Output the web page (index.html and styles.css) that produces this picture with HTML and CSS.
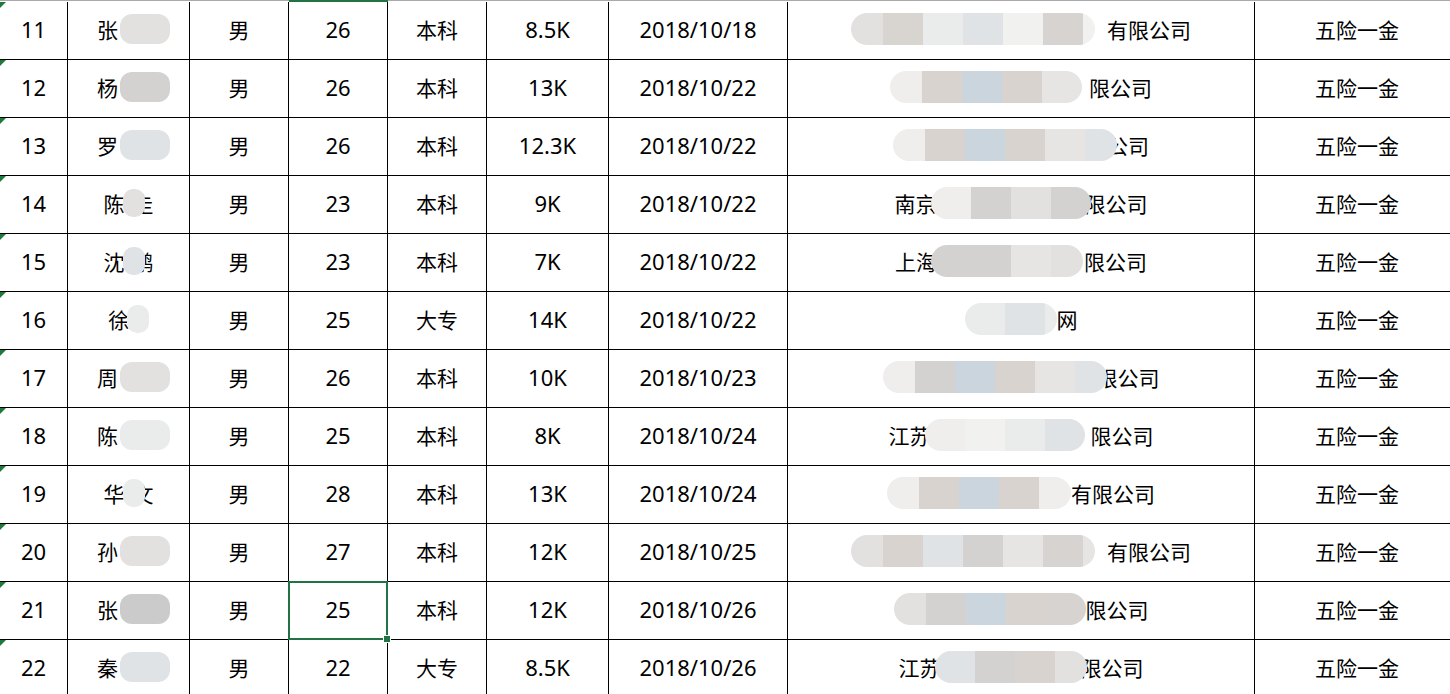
FILE: index.html
```html
<!DOCTYPE html>
<html lang="zh">
<head>
<meta charset="utf-8">
<title>Sheet</title>
<link rel="stylesheet" href="styles.css">
</head>
<body>
<div class="sheet">
  <div class="topline">
    <span></span><span></span><span></span><span class="sel"></span><span></span><span></span><span></span><span></span><span></span>
  </div>

  <div class="row">
    <div class="cell num idx">11</div>
    <div class="cell"><span class="t">张</span><span class="mz nm"><i class="b g1"></i></span></div>
    <div class="cell">男</div><div class="cell num">26</div><div class="cell">本科</div><div class="cell num">8.5K</div><div class="cell num">2018/10/18</div>
    <div class="cell co"><span class="mz"><i class="b g1 s"></i><i class="b g2"></i><i class="b g3"></i><i class="b g4"></i><i class="b g5"></i><i class="b g6"></i><i class="b g5 q"></i></span><span class="t gap">有限公司</span></div>
    <div class="cell">五险一金</div>
  </div>

  <div class="row">
    <div class="cell num idx">12</div>
    <div class="cell"><span class="t">杨</span><span class="mz nm"><i class="b g7"></i></span></div>
    <div class="cell">男</div><div class="cell num">26</div><div class="cell">本科</div><div class="cell num">13K</div><div class="cell num">2018/10/22</div>
    <div class="cell co"><span class="mz"><i class="b g8 s"></i><i class="b pk"></i><i class="b bl"></i><i class="b pk"></i><i class="b g9"></i></span><span class="t gap-s">限公司</span></div>
    <div class="cell">五险一金</div>
  </div>

  <div class="row">
    <div class="cell num idx">13</div>
    <div class="cell"><span class="t">罗</span><span class="mz nm"><i class="b g4"></i></span></div>
    <div class="cell">男</div><div class="cell num">26</div><div class="cell">本科</div><div class="cell num">12.3K</div><div class="cell num">2018/10/22</div>
    <div class="cell co"><span class="mz"><i class="b g8 s"></i><i class="b pk"></i><i class="b bl"></i><i class="b pk"></i><i class="b g9"></i><i class="b g4 s"></i></span><span class="t over">公司</span></div>
    <div class="cell">五险一金</div>
  </div>

  <div class="row">
    <div class="cell num idx">14</div>
    <div class="cell"><span class="t">陈</span><span class="mz dot"><i class="b g1 h"></i></span><span class="t">圭</span></div>
    <div class="cell">男</div><div class="cell num">23</div><div class="cell">本科</div><div class="cell num">9K</div><div class="cell num">2018/10/22</div>
    <div class="cell co"><span class="t">南京</span><span class="mz over"><i class="b g8"></i><i class="b g7"></i><i class="b g1"></i><i class="b g7"></i></span><span class="t">限公司</span></div>
    <div class="cell">五险一金</div>
  </div>

  <div class="row">
    <div class="cell num idx">15</div>
    <div class="cell"><span class="t">沈</span><span class="mz dot"><i class="b g4 h"></i></span><span class="t">鹏</span></div>
    <div class="cell">男</div><div class="cell num">23</div><div class="cell">本科</div><div class="cell num">7K</div><div class="cell num">2018/10/22</div>
    <div class="cell co"><span class="t">上海</span><span class="mz over"><i class="b g7"></i><i class="b g7"></i><i class="b g9"></i><i class="b g1 s"></i></span><span class="t gap-s">限公司</span></div>
    <div class="cell">五险一金</div>
  </div>

  <div class="row">
    <div class="cell num idx">16</div>
    <div class="cell"><span class="t">徐</span><span class="mz dot"><i class="b g3 h"></i></span><span class="t">=</span></div>
    <div class="cell">男</div><div class="cell num">25</div><div class="cell">大专</div><div class="cell num">14K</div><div class="cell num">2018/10/22</div>
    <div class="cell co"><span class="mz"><i class="b g3"></i><i class="b g4"></i><i class="b g3 q"></i></span><span class="t">网</span></div>
    <div class="cell">五险一金</div>
  </div>

  <div class="row">
    <div class="cell num idx">17</div>
    <div class="cell"><span class="t">周</span><span class="mz nm"><i class="b g1"></i></span></div>
    <div class="cell">男</div><div class="cell num">26</div><div class="cell">本科</div><div class="cell num">10K</div><div class="cell num">2018/10/23</div>
    <div class="cell co"><span class="mz"><i class="b g8 s"></i><i class="b g7"></i><i class="b bl"></i><i class="b pk"></i><i class="b g9"></i><i class="b g4 s"></i></span><span class="t over">限公司</span></div>
    <div class="cell">五险一金</div>
  </div>

  <div class="row">
    <div class="cell num idx">18</div>
    <div class="cell"><span class="t">陈</span><span class="mz nm"><i class="b g3"></i></span></div>
    <div class="cell">男</div><div class="cell num">25</div><div class="cell">本科</div><div class="cell num">8K</div><div class="cell num">2018/10/24</div>
    <div class="cell co"><span class="t">江苏</span><span class="mz over"><i class="b g8"></i><i class="b g5"></i><i class="b g3"></i><i class="b g4"></i></span><span class="t gap">限公司</span></div>
    <div class="cell">五险一金</div>
  </div>

  <div class="row">
    <div class="cell num idx">19</div>
    <div class="cell"><span class="t">华</span><span class="mz dot"><i class="b g3 h"></i></span><span class="t">文</span></div>
    <div class="cell">男</div><div class="cell num">28</div><div class="cell">本科</div><div class="cell num">13K</div><div class="cell num">2018/10/24</div>
    <div class="cell co"><span class="mz"><i class="b g8 s"></i><i class="b pk"></i><i class="b bl"></i><i class="b pk"></i><i class="b g8 s"></i></span><span class="t">有限公司</span></div>
    <div class="cell">五险一金</div>
  </div>

  <div class="row">
    <div class="cell num idx">20</div>
    <div class="cell"><span class="t">孙</span><span class="mz nm"><i class="b g1"></i></span></div>
    <div class="cell">男</div><div class="cell num">27</div><div class="cell">本科</div><div class="cell num">12K</div><div class="cell num">2018/10/25</div>
    <div class="cell co"><span class="mz"><i class="b g1 s"></i><i class="b pk"></i><i class="b g4"></i><i class="b g7"></i><i class="b g9"></i><i class="b g6"></i><i class="b g9 q"></i></span><span class="t gap">有限公司</span></div>
    <div class="cell">五险一金</div>
  </div>

  <div class="row">
    <div class="cell num idx">21</div>
    <div class="cell"><span class="t">张</span><span class="mz nm"><i class="b g10"></i></span></div>
    <div class="cell">男</div><div class="cell num active">25</div><div class="cell">本科</div><div class="cell num">12K</div><div class="cell num">2018/10/26</div>
    <div class="cell co"><span class="mz"><i class="b g1 s"></i><i class="b g7"></i><i class="b bl"></i><i class="b pk"></i><i class="b g6"></i></span><span class="t">限公司</span></div>
    <div class="cell">五险一金</div>
  </div>

  <div class="row">
    <div class="cell num idx">22</div>
    <div class="cell"><span class="t">秦</span><span class="mz nm"><i class="b g4"></i></span></div>
    <div class="cell">男</div><div class="cell num">22</div><div class="cell">大专</div><div class="cell num">8.5K</div><div class="cell num">2018/10/26</div>
    <div class="cell co"><span class="t">江苏</span><span class="mz over"><i class="b g4"></i><i class="b g7"></i><i class="b pk"></i><i class="b g1 s"></i></span><span class="t">限公司</span></div>
    <div class="cell">五险一金</div>
  </div>
</div>
</body>
</html>
```

FILE: styles.css
```css
html, body {
  margin: 0;
  padding: 0;
  background: #ffffff;
  overflow: hidden;
}

.sheet {
  width: 1460px;
  font-family: "Noto Sans CJK SC", "Noto Sans", sans-serif;
  font-size: 21px;
  color: #000;
}

.topline,
.row {
  display: grid;
  grid-template-columns: 68px 122px 99px 99px 99px 122px 179px 467px 205px;
}

.topline {
  height: 2px;
}
.topline span {
  border-top: 1px solid #a9a9a9;
}
.topline span.sel {
  border-top: 2px solid #217346;
}

.cell {
  box-sizing: border-box;
  height: 58px;
  padding-bottom: 3px;
  border-right: 1px solid #000;
  border-bottom: 1px solid #000;
  display: flex;
  align-items: center;
  justify-content: center;
  white-space: nowrap;
  position: relative;
  line-height: 1;
}

.num {
  font-family: "Noto Sans", sans-serif;
  font-size: 22px;
}

.idx::before {
  content: "";
  position: absolute;
  left: 0;
  top: 0;
  border-top: 6px solid #1f7a3a;
  border-right: 6px solid transparent;
}

.active {
  z-index: 3;
}
.active::after {
  content: "";
  position: absolute;
  left: -1px;
  top: -1px;
  right: -1px;
  bottom: -1px;
  border: 2px solid #217346;
}
.active::before {
  content: "";
  position: absolute;
  right: -4px;
  bottom: -4px;
  width: 6px;
  height: 6px;
  background: #217346;
  border: 1px solid #fff;
  z-index: 2;
}

.t {
  position: relative;
  z-index: 0;
}

.mz {
  display: inline-flex;
  height: 32px;
  border-radius: 16px;
  overflow: hidden;
  position: relative;
  z-index: 1;
  filter: blur(0.6px);
}
.mz.nm {
  height: 30px;
  border-radius: 12px;
  margin-left: 2px;
  margin-right: -10px;
}
.mz.nm .b {
  width: 50px;
}
.mz.dot {
  height: 28px;
  border-radius: 10px;
  margin-left: -2px;
  margin-right: -12px;
}
.mz.over {
  margin-left: -6px;
  margin-right: -6px;
}

.b {
  display: block;
  width: 40px;
  height: 100%;
}
.b.h { width: 22px; }
.b.s { width: 32px; }
.b.q { width: 12px; }

.g1 { background: #e3e1df; }
.g2 { background: #d8d5d0; }
.g3 { background: #eaeceb; }
.g4 { background: #dfe3e6; }
.g5 { background: #f1f1f0; }
.g6 { background: #d6d3d0; }
.g7 { background: #d4d2d0; }
.g8 { background: #efeeec; }
.g9 { background: #e7e5e3; }
.g10 { background: #cbcbcb; }
.pk { background: #d9d3d0; }
.bl { background: #cbd5de; }

.gap { margin-left: 12px; }
.gap-s { margin-left: 7px; }
.over { margin-left: -10px; }
```
